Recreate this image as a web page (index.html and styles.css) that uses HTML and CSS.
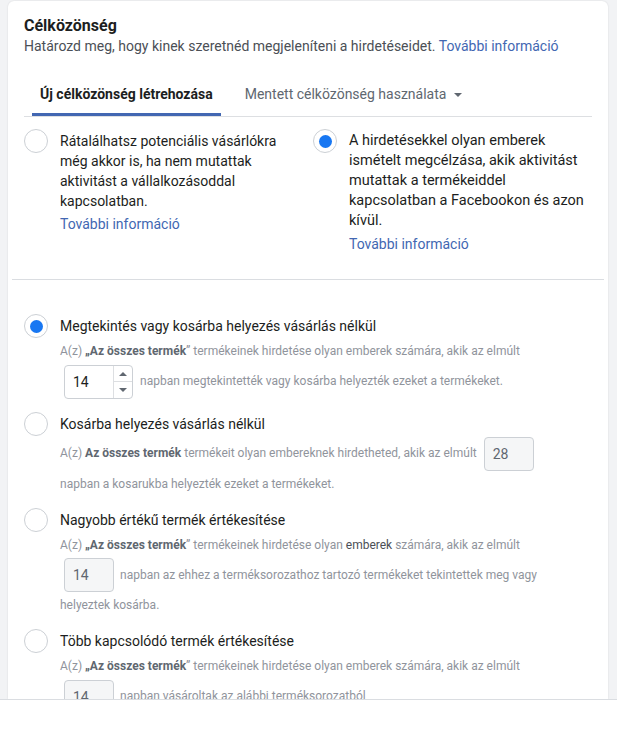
FILE: index.html
```html
<!DOCTYPE html>
<html lang="hu">
<head>
<meta charset="utf-8">
<title>Célközönség</title>
<link rel="stylesheet" href="styles.css">
</head>
<body>
<div class="page">
  <section class="card">
    <header class="head">
      <h2 class="title">Célközönség</h2>
      <p class="sub">Határozd meg, hogy kinek szeretnéd megjeleníteni a hirdetéseidet. <a class="link">További információ</a></p>
    </header>

    <nav class="tabs">
      <div class="tab active">Új célközönség létrehozása</div>
      <div class="tab">Mentett célközönség használata<span class="caret"></span></div>
    </nav>

    <div class="options">
      <div class="opt">
        <span class="radio"></span>
        <div class="opt-body">
          <p class="opt-text">Rátalálhatsz potenciális vásárlókra még akkor is, ha nem mutattak aktivitást a vállalkozásoddal kapcsolatban.</p>
          <a class="link opt-link">További információ</a>
        </div>
      </div>
      <div class="opt">
        <span class="radio checked"></span>
        <div class="opt-body">
          <p class="opt-text opt-text-lg">A hirdetésekkel olyan emberek ismételt megcélzása, akik aktivitást mutattak a termékeiddel kapcsolatban a Facebookon és azon kívül.</p>
          <a class="link opt-link">További információ</a>
        </div>
      </div>
    </div>

    <hr class="divider">

    <div class="list">
      <div class="item item-first">
        <span class="radio checked"></span>
        <div class="item-body">
          <div class="item-title">Megtekintés vagy kosárba helyezés vásárlás nélkül</div>
          <div class="desc">A(z) <b>„Az összes termék</b>” termékeinek hirdetése olyan emberek számára, akik az elmúlt</div>
          <div class="desc"><span class="num stepper"><span class="num-val">14</span><span class="spin"><span class="spin-btn"><span class="tri-up"></span></span><span class="spin-btn"><span class="tri-down"></span></span></span></span>napban megtekintették vagy kosárba helyezték ezeket a termékeket.</div>
        </div>
      </div>

      <div class="item">
        <span class="radio"></span>
        <div class="item-body">
          <div class="item-title">Kosárba helyezés vásárlás nélkül</div>
          <div class="desc desc-shift">A(z) <b>Az összes termék</b> termékeit olyan embereknek hirdetheted, akik az elmúlt <span class="num disabled"><span class="num-val">28</span></span>napban a kosarukba helyezték ezeket a termékeket.</div>
        </div>
      </div>

      <div class="item">
        <span class="radio"></span>
        <div class="item-body">
          <div class="item-title">Nagyobb értékű termék értékesítése</div>
          <div class="desc">A(z) <b>„Az összes termék</b>” termékeinek hirdetése olyan <span class="em">emberek</span> számára, akik az elmúlt</div>
          <div class="desc"><span class="num disabled"><span class="num-val">14</span></span>napban az ehhez a terméksorozathoz tartozó termékeket tekintettek meg vagy helyeztek kosárba.</div>
        </div>
      </div>

      <div class="item">
        <span class="radio"></span>
        <div class="item-body">
          <div class="item-title">Több kapcsolódó termék értékesítése</div>
          <div class="desc">A(z) <b>„Az összes termék</b>” termékeinek hirdetése olyan emberek számára, akik az elmúlt</div>
          <div class="desc"><span class="num disabled"><span class="num-val">14</span></span>napban vásároltak az alábbi terméksorozatból</div>
        </div>
      </div>
    </div>
  </section>
  <footer class="footer"></footer>
</div>
</body>
</html>
```

FILE: styles.css
```css
* { box-sizing: border-box; }

html, body {
  margin: 0;
  padding: 0;
}

body {
  width: 617px;
  height: 730px;
  overflow: hidden;
  background: #f2f3f5;
  font-family: Roboto, "Liberation Sans", Arial, sans-serif;
  color: #1c1e21;
}

.page {
  display: flex;
  flex-direction: column;
  height: 730px;
}

.card {
  flex: 1;
  min-height: 0;
  overflow: hidden;
  margin: 1px 9px 0 8px;
  padding: 15px 16px 0;
  background: #fff;
  border-radius: 6px 6px 0 0;
  box-shadow: 0 0 2px rgba(0, 0, 0, 0.12);
}

.footer {
  flex: none;
  height: 31px;
  background: #fff;
  border-top: 1px solid #dadde1;
}

.title {
  margin: 0;
  font-size: 16px;
  line-height: 20px;
  font-weight: 700;
  color: #1c1e21;
}

.sub {
  margin: 0;
  font-size: 14px;
  line-height: 20px;
  color: #4b4f56;
}

.link {
  color: #4267b2;
  text-decoration: none;
  cursor: pointer;
}

/* tabs */
.tabs {
  display: flex;
  gap: 16px;
  margin-top: 16px;
  padding-left: 8px;
  border-bottom: 1px solid #dddfe2;
}

.tab {
  display: flex;
  align-items: center;
  padding: 14px 8px 11px;
  font-size: 14px;
  line-height: 16px;
  color: #606770;
  border-bottom: 3px solid transparent;
}

.tab.active {
  font-weight: 700;
  color: #1c1e21;
  border-bottom-color: #4267b2;
}

.caret {
  width: 0;
  height: 0;
  margin-left: 8px;
  margin-top: 2px;
  border-left: 4px solid transparent;
  border-right: 4px solid transparent;
  border-top: 4px solid #606770;
}

/* radio choice cards */
.options {
  display: grid;
  grid-template-columns: 1fr 1fr;
  column-gap: 10px;
  padding: 12px 0 25px;
}

.opt {
  display: flex;
  align-items: flex-start;
  gap: 12px;
}

.radio {
  flex: none;
  display: flex;
  align-items: center;
  justify-content: center;
  width: 24px;
  height: 24px;
  border-radius: 50%;
  border: 1px solid #ccd0d5;
  background: #fff;
}

.radio.checked::after {
  content: "";
  width: 13px;
  height: 13px;
  border-radius: 50%;
  background: #1877f2;
}

.opt-body {
  padding-top: 2px;
  font-size: 14px;
  line-height: 20px;
}

.opt-text {
  margin: 0;
  color: #1c1e21;
}

.opt-text-lg {
  font-size: 14.5px;
}

.opt-link {
  display: block;
  margin-top: 3px;
}

.divider {
  height: 0;
  margin: 0 -12px;
  border: 0;
  border-top: 1px solid #dadde1;
}

/* list of audiences */
.list {
  padding-top: 36px;
}

.item {
  display: flex;
  align-items: flex-start;
  gap: 12px;
  margin-bottom: 11px;
}

.item-first {
  margin-bottom: 17px;
}

.item .radio {
  margin-top: -2px;
}

.item-body {
  width: 505px;
}

.item-title {
  font-size: 14px;
  line-height: 20px;
  color: #1c1e21;
}

.desc {
  font-size: 12px;
  line-height: 30px;
  color: #90949c;
}

.desc-shift {
  padding-top: 4px;
}

.desc b {
  font-weight: 700;
  color: #606770;
}

.desc .em {
  color: #4b4f56;
}

.num {
  display: inline-flex;
  align-items: stretch;
  vertical-align: middle;
  width: 50px;
  height: 34px;
  margin: -2px 6px -2px 4px;
  border: 1px solid #ccd0d5;
  border-radius: 4px;
  background: #fff;
  font-size: 14px;
  line-height: 32px;
  color: #1c1e21;
}

.num.disabled {
  background: #f5f6f7;
  color: #606770;
}

.num-val {
  flex: 1;
  padding-left: 8px;
}

.stepper {
  width: 69px;
  margin-right: 7px;
}

.spin {
  display: flex;
  flex-direction: column;
  width: 19px;
  border-left: 1px solid #dddfe2;
}

.spin-btn {
  flex: 1;
  display: flex;
  align-items: center;
  justify-content: center;
}

.spin-btn + .spin-btn {
  border-top: 1px solid #dddfe2;
}

.tri-up,
.tri-down {
  width: 0;
  height: 0;
  border-left: 4px solid transparent;
  border-right: 4px solid transparent;
}

.tri-up {
  border-bottom: 4px solid #606770;
}

.tri-down {
  border-top: 4px solid #606770;
}
```
